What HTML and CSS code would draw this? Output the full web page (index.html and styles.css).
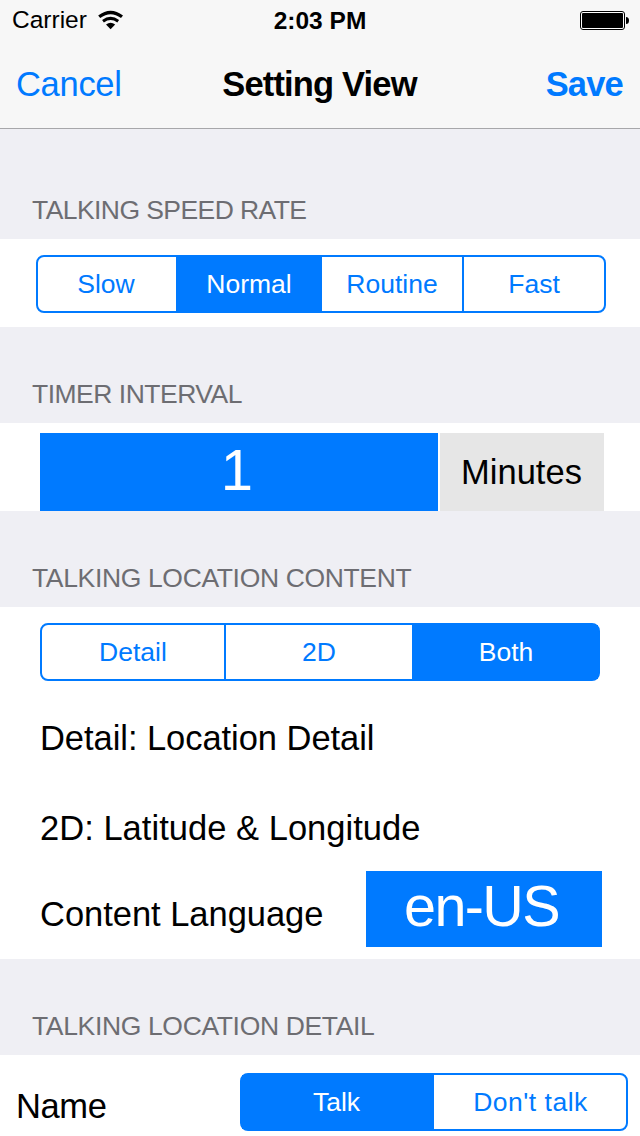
FILE: index.html
```html
<!DOCTYPE html>
<html lang="en">
<head>
<meta charset="utf-8">
<title>Setting View</title>
<link rel="stylesheet" href="styles.css">
</head>
<body>
<div class="screen">
  <header class="topbar">
    <div class="status">
      <div class="carrier">
        <span>Carrier</span>
        <svg class="wifi" width="26" height="20" viewBox="98 10 26 20">
          <path d="M99.2 16.8Q110.6 8.2 122 16.8" fill="none" stroke="#000" stroke-width="3.3"/>
          <path d="M103 21.2Q110.6 15.6 118.2 21.2" fill="none" stroke="#000" stroke-width="3"/>
          <path d="M106 24.6Q110.6 21.1 115.2 24.6L110.6 29.2Z"/>
        </svg>
      </div>
      <div class="clock">2:03 PM</div>
      <svg class="battery" width="50" height="20" viewBox="580 10 50 20">
        <rect x="580.5" y="11.5" width="44" height="18" rx="2.5" fill="#fff" stroke="#000"/>
        <rect x="582" y="13" width="41" height="15" rx="1"/>
        <path d="M626 17Q629 17 629 20.5Q629 24 626 24Z"/>
      </svg>
    </div>
    <nav class="nav">
      <a class="cancel">Cancel</a>
      <h1 class="title">Setting View</h1>
      <a class="save">Save</a>
    </nav>
  </header>

  <h2 class="heading first">TALKING SPEED RATE</h2>
  <section class="cell speed">
    <div class="segmented speed-control">
      <span class="segment slow">Slow</span>
      <span class="segment selected">Normal</span>
      <span class="segment">Routine</span>
      <span class="segment divided">Fast</span>
    </div>
  </section>

  <h2 class="heading">TIMER INTERVAL</h2>
  <section class="cell timer">
    <div class="value">1</div>
    <div class="unit">Minutes</div>
  </section>

  <h2 class="heading location">TALKING LOCATION CONTENT</h2>
  <section class="cell content">
    <div class="segmented content-control">
      <span class="segment detail">Detail</span>
      <span class="segment divided">2D</span>
      <span class="segment selected both">Both</span>
    </div>
    <p class="note detail-note">Detail: Location Detail</p>
    <p class="note">2D: Latitude &amp; Longitude</p>
    <div class="language">
      <span class="note">Content Language</span>
      <span class="language-value">en-US</span>
    </div>
  </section>

  <h2 class="heading location">TALKING LOCATION DETAIL</h2>
  <section class="cell name-row">
    <span class="name">Name</span>
    <div class="segmented talk-control">
      <span class="segment selected">Talk</span>
      <span class="segment dont">Don't talk</span>
    </div>
  </section>
</div>
</body>
</html>
```
FILE: styles.css
```css
* { box-sizing: border-box; }
body {
  margin: 0;
  background: #efeff4;
  font-family: "Liberation Sans", Arial, sans-serif;
  color: #000;
}
h1, h2, p { margin: 0; font-weight: 400; }
.screen {
  width: 640px;
  height: 1136px;
  overflow: hidden;
  display: flex;
  flex-direction: column;
}
.topbar {
  flex: none;
  height: 129px;
  background: #f7f7f7;
  border-bottom: 1px solid #a7a7aa;
}
.status {
  height: 40px;
  display: grid;
  grid-template-columns: 1fr 100px 1fr;
  grid-template-rows: 40px;
  align-items: center;
  font-size: 24.5px;
  line-height: 40px;
}
.carrier { display: flex; align-items: center; gap: 10px; padding-left: 12px; }
.carrier span { width: 76px; }
.wifi { display: block; }
.clock { padding-top: 2px; text-align: center; font-size: 24.5px; font-weight: 700; white-space: nowrap; }
.battery { display: block; justify-self: end; margin-right: 10px; }
.nav {
  height: 88px;
  display: grid;
  grid-template-columns: 1fr 200px 1fr;
  align-items: center;
  padding: 0 17px 0 16px;
  font-size: 34.5px;
  line-height: 89px;
  white-space: nowrap;
}
.cancel { color: #007aff; letter-spacing: -0.3px; }
.title { font-size: 34.5px; font-weight: 700; letter-spacing: -0.85px; text-align: center; }
.save { color: #007aff; font-weight: 700; letter-spacing: -0.8px; text-align: right; }
.heading {
  flex: none;
  height: 96px;
  padding: 51px 32px 13px;
  font-size: 26.5px;
  line-height: 32px;
  letter-spacing: -0.5px;
  color: #6d6d72;
  white-space: nowrap;
}
.heading.first { height: 110px; padding-top: 65px; letter-spacing: -0.57px; }
.heading.location { letter-spacing: -0.35px; }
.cell { flex: none; background: #fff; }
.segmented {
  display: grid;
  height: 58px;
  border: 2px solid #007aff;
  border-radius: 8px;
  font-size: 26.5px;
  line-height: 54px;
  color: #007aff;
  text-align: center;
  white-space: nowrap;
}
.selected { background: #007aff; color: #fff; }
.divided { border-left: 2px solid #007aff; }
.speed { height: 88px; padding: 16px 34px 0 36px; }
.speed-control { grid-template-columns: 138px 146px 140px 142px; }
.slow { padding-right: 2px; }
.both { padding-left: 2px; }
.timer { height: 88px; padding: 10px 36px 0 40px; display: flex; gap: 2px; }
.value {
  width: 398px;
  padding-right: 4px;
  background: #007aff;
  color: #fff;
  font-size: 58px;
  line-height: 74px;
  text-align: center;
}
.unit {
  width: 164px;
  padding-right: 1px;
  background: #e6e6e6;
  font-size: 34.5px;
  line-height: 79px;
  height: 78px;
  text-align: center;
}
.content { height: 352px; padding: 16px 38px 0 40px; }
.content-control { width: 560px; grid-template-columns: 182px 188px 186px; }
.note { font-size: 34.5px; line-height: 60px; letter-spacing: 0.03px; white-space: nowrap; }
.detail-note { margin: 27px 0 30px; letter-spacing: -0.05px; }
.language { display: flex; justify-content: space-between; margin-top: 13px; }
.language .note { line-height: 86px; letter-spacing: -0.03px; }
.language-value {
  width: 236px;
  height: 76px;
  padding-right: 5px;
  background: #007aff;
  color: #fff;
  font-size: 57.5px;
  line-height: 71px;
  letter-spacing: -1.6px;
  text-align: center;
}
.name-row {
  height: 81px;
  padding: 18px 12px 0 16px;
  display: flex;
  justify-content: space-between;
}
.name { font-size: 34.5px; line-height: 66px; letter-spacing: -0.4px; }
.talk-control { width: 388px; grid-template-columns: 192px 192px; }
.talk-control .selected { padding-right: 3px; }
.dont { letter-spacing: 0.5px; padding-left: 1px; }
```
